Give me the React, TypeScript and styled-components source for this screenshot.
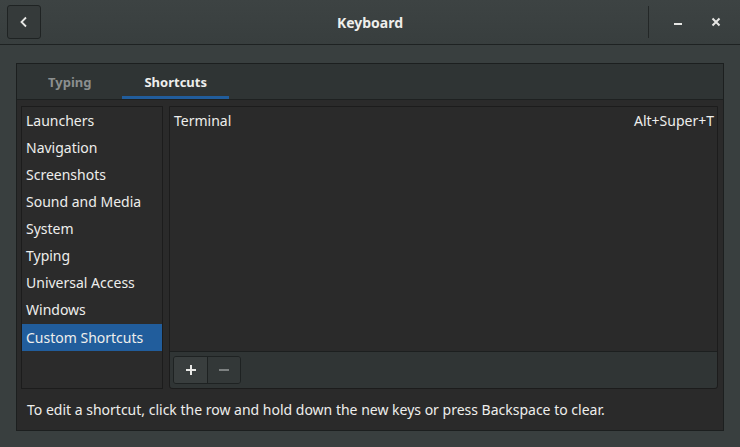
import React from "react";
import styled, { createGlobalStyle } from "styled-components";

const Global = createGlobalStyle`
  html, body { margin: 0; padding: 0; background: #393f3f; }
  body { font-family: "Noto Sans", "DejaVu Sans", sans-serif; font-size: 14px; color: #eeeeec; }
  * { box-sizing: border-box; }
`;

const Window = styled.div`
  width: 740px;
  height: 447px;
  display: flex;
  flex-direction: column;
  background: #393f3f;
  overflow: hidden;
`;

const HeaderBar = styled.header`
  height: 45px;
  flex: none;
  display: grid;
  grid-template-columns: 1fr auto 1fr;
  align-items: center;
  padding: 0 7px;
  background: linear-gradient(#3d4343, #383e3e);
  border-bottom: 1px solid #1e2222;
`;

const HeaderStart = styled.div`
  display: flex;
  align-items: center;
`;

const HeaderEnd = styled.div`
  display: flex;
  align-items: center;
  justify-content: flex-end;
  height: 100%;
`;

const BackButton = styled.button`
  width: 34px;
  height: 34px;
  display: flex;
  align-items: center;
  justify-content: center;
  background: #353a3a;
  border: 1px solid #1f2323;
  border-radius: 3px;
  padding: 0;
  color: #eeeeec;
`;

const Title = styled.div`
  font-weight: bold;
  font-size: 14px;
  color: #eeeeec;
  padding-top: 1px;
`;

const Separator = styled.div`
  width: 1px;
  height: 32px;
  background: #232727;
  margin-right: 8px;
`;

const WindowButton = styled.button`
  width: 34px;
  height: 34px;
  display: flex;
  align-items: center;
  justify-content: center;
  background: transparent;
  border: none;
  padding: 0;
  margin-left: 4px;
  color: #e6e6e4;
`;

const Body = styled.main`
  flex: 1;
  padding: 18px 16px 16px 16px;
  display: flex;
`;

const Notebook = styled.section`
  flex: 1;
  display: flex;
  flex-direction: column;
  background: #2a2a2a;
  border: 1px solid #1c1f1f;
`;

const TabBar = styled.nav`
  height: 36px;
  flex: none;
  display: flex;
  padding-left: 9px;
  background: #2f3434;
  border-bottom: 1px solid #1e2121;
`;

const Tab = styled.div<{ $active?: boolean }>`
  padding: 0 22px;
  margin-right: 9px;
  display: flex;
  align-items: center;
  font-weight: bold;
  font-size: 13px;
  color: ${(p) => (p.$active ? "#eeeeec" : "#8b8f8f")};
  box-shadow: ${(p) => (p.$active ? "inset 0 -3px 0 #215d9c" : "none")};
`;

const Page = styled.div`
  flex: 1;
  display: grid;
  grid-template-columns: 142px 1fr;
  grid-template-rows: 1fr auto;
  column-gap: 6px;
  padding: 6px 4px 0 4px;
`;

const SectionList = styled.ul`
  margin: 0;
  padding: 0;
  list-style: none;
  border: 1px solid #1c1c1c;
  background: #2b2b2b;
`;

const SectionItem = styled.li<{ $selected?: boolean; $separated?: boolean }>`
  height: 27px;
  display: flex;
  align-items: center;
  padding-left: 4px;
  font-size: 14px;
  color: #eeeeec;
  white-space: nowrap;
  background: ${(p) => (p.$selected ? "#215d9c" : "transparent")};
  margin-top: ${(p) => (p.$separated ? "1px" : "0")};
`;

const ShortcutPanel = styled.div`
  display: flex;
  flex-direction: column;
  border: 1px solid #1c1c1c;
  border-radius: 0 0 3px 3px;
  background: #2a2a2a;
  margin-right: 1px;
`;

const ShortcutList = styled.div`
  flex: 1;
  border-bottom: 1px solid #1c1f1f;
`;

const ShortcutRow = styled.div`
  height: 27px;
  display: flex;
  align-items: center;
  justify-content: space-between;
  padding: 0 3px 0 4px;
  font-size: 14px;
  color: #eeeeec;
`;

const Toolbar = styled.div`
  height: 36px;
  flex: none;
  display: flex;
  align-items: center;
  padding: 0 3px;
  background: #303535;
  border-radius: 0 0 3px 3px;
`;

const ButtonGroup = styled.div`
  display: flex;
  height: 28px;
  border: 1px solid #1e2222;
  border-radius: 3px;
  overflow: hidden;
`;

const ToolButton = styled.button<{ $disabled?: boolean }>`
  width: 33px;
  height: 100%;
  display: flex;
  align-items: center;
  justify-content: center;
  padding: 0;
  border: none;
  background: ${(p) => (p.$disabled ? "#333838" : "#393e3e")};
  & + & { border-left: 1px solid #1e2222; }
`;

const Footer = styled.div`
  grid-column: 1 / span 2;
  height: 41px;
  display: flex;
  align-items: center;
  padding-left: 6px;
  font-size: 14px;
  color: #eeeeec;
`;

const sections = [
  "Launchers",
  "Navigation",
  "Screenshots",
  "Sound and Media",
  "System",
  "Typing",
  "Universal Access",
  "Windows",
];

export default function App() {
  return (
    <Window>
      <Global />
      <HeaderBar>
        <HeaderStart>
          <BackButton aria-label="Back">
            <svg width="16" height="16" viewBox="0 0 16 16">
              <path d="M10 3.5 L5.5 8 L10 12.5" fill="none" stroke="#e8e8e6" strokeWidth="1.8" />
            </svg>
          </BackButton>
        </HeaderStart>
        <Title>Keyboard</Title>
        <HeaderEnd>
          <Separator />
          <WindowButton aria-label="Minimize">
            <svg width="16" height="16" viewBox="0 0 16 16">
              <rect x="4" y="9" width="8" height="2" fill="#e6e6e4" />
            </svg>
          </WindowButton>
          <WindowButton aria-label="Close">
            <svg width="16" height="16" viewBox="0 0 16 16">
              <path d="M4.5 4.5 L11.5 11.5 M11.5 4.5 L4.5 11.5" stroke="#e6e6e4" strokeWidth="2" />
            </svg>
          </WindowButton>
        </HeaderEnd>
      </HeaderBar>
      <Body>
        <Notebook>
          <TabBar>
            <Tab>Typing</Tab>
            <Tab $active>Shortcuts</Tab>
          </TabBar>
          <Page>
            <SectionList>
              {sections.map((s) => (
                <SectionItem key={s}>{s}</SectionItem>
              ))}
              <SectionItem $selected $separated>
                Custom Shortcuts
              </SectionItem>
            </SectionList>
            <ShortcutPanel>
              <ShortcutList>
                <ShortcutRow>
                  <span>Terminal</span>
                  <span>Alt+Super+T</span>
                </ShortcutRow>
              </ShortcutList>
              <Toolbar>
                <ButtonGroup>
                  <ToolButton aria-label="Add">
                    <svg width="16" height="16" viewBox="0 0 16 16">
                      <path d="M8 3 V13 M3 8 H13" stroke="#e8e8e6" strokeWidth="2" />
                    </svg>
                  </ToolButton>
                  <ToolButton $disabled aria-label="Remove">
                    <svg width="16" height="16" viewBox="0 0 16 16">
                      <path d="M3 8 H13" stroke="#7d8181" strokeWidth="2" />
                    </svg>
                  </ToolButton>
                </ButtonGroup>
              </Toolbar>
            </ShortcutPanel>
            <Footer>To edit a shortcut, click the row and hold down the new keys or press Backspace to clear.</Footer>
          </Page>
        </Notebook>
      </Body>
    </Window>
  );
}
